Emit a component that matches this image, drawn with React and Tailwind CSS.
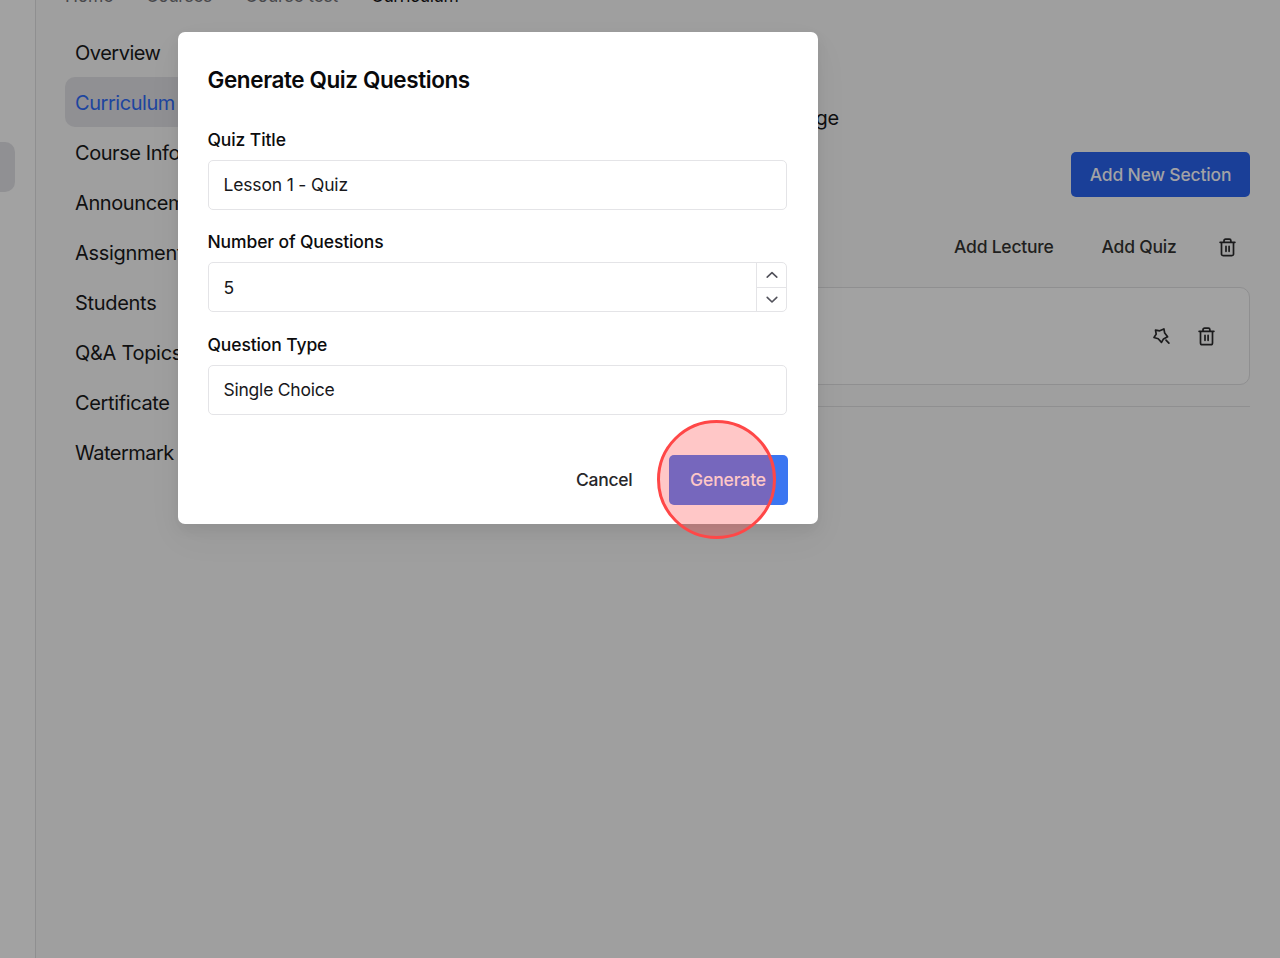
import React from "react";

const NAV = [
  ["Overview", "tracking-[-0.5px]"],
  ["Curriculum", "tracking-[-0.46px]"],
  ["Course Info", "tracking-[-0.44px]"],
  ["Announcement", "tracking-[-0.4px]"],
  ["Assignments", "tracking-[-0.32px]"],
  ["Students", "tracking-[-0.3px]"],
  ["Q&A Topics", "tracking-[-0.3px]"],
  ["Certificate", "tracking-[-0.36px]"],
  ["Watermark", "tracking-[-0.5px]"],
];

function Trash() {
  return (
    <svg className="block h-5 w-5 shrink-0" viewBox="0 0 20 20" fill="none" stroke="#1b1b1c" strokeWidth="1.7" strokeLinecap="round" strokeLinejoin="round">
      <path d="M3.1 5.3h14.8M7 5.1V3.7c0-1 .6-1.6 1.6-1.6h3.7c1 0 1.6.6 1.6 1.6v1.4M4.5 5.5v11.4c0 1 .7 1.7 1.7 1.7h8.6c1 0 1.7-.7 1.7-1.7V5.5M9 9.3v5M12.1 9.3v5" />
    </svg>
  );
}

function MagicStar() {
  return (
    <svg className="block h-5 w-5 shrink-0" viewBox="0 0 20 20" fill="none" stroke="#1b1b1c" strokeWidth="1.7" strokeLinecap="round" strokeLinejoin="round">
      <path d="M12.9 2.9 8.7 4.8 4.5 4.1 5.2 8.1 3 11.5 7.2 12.7 10.5 16.4 12.5 12.9 16.6 10.8 13.7 7.1ZM15 14.2l2.9 2.9" />
    </svg>
  );
}

function Field({ label, labelClass, value, valueClass, children }) {
  return (
    <div className="flex flex-col">
      <label className={`h-6 text-[17.5px] font-medium leading-6 text-[#0c0c0d] whitespace-nowrap ${labelClass}`}>{label}</label>
      <div className="mt-2 flex h-[50px] w-[579.5px] overflow-hidden rounded-[5px] border-[1.25px] border-[#e4e4e7] bg-white">
        <div className="flex flex-1 items-center pl-[15px] text-[17.5px] text-[#18181b] whitespace-nowrap">
          <span className={valueClass}>{value}</span>
        </div>
        {children}
      </div>
    </div>
  );
}

export default function App() {
  return (
    <div className="relative flex h-[958px] w-[1280px] overflow-hidden bg-[#9f9f9f] font-['Inter',sans-serif]">
      <aside className="h-full w-9 shrink-0 border-r border-[#8f8f90] bg-[#a2a2a2] pt-[142px]">
        <div className="h-[50px] w-[15px] rounded-r-[10px] bg-[#909093]" />
      </aside>

      <div className="flex min-w-0 flex-1 flex-col">
        <div className="-mt-[15px] flex h-[22px] items-center pl-[29px] text-[17.5px] leading-[22px] tracking-[-0.2px] whitespace-nowrap text-[#48484b]">
          <span className="w-[81px]">Home</span>
          <span className="w-[99px] tracking-[-0.45px]">Courses</span>
          <span className="w-[126px]">Course test</span>
          <span className="tracking-[-0.4px] text-[#0c0c0d]">Curriculum</span>
        </div>

        <div className="flex pt-5">
          <nav className="ml-[29px] w-[250px] shrink-0">
            {NAV.map(([name, cls]) => (
              <div
                key={name}
                className={`flex h-[50px] items-center rounded-[10px] pt-px pl-[10px] text-[20px] whitespace-nowrap ${
                  name === "Curriculum" ? "bg-[#909093] text-[#1d459f]" : "text-[#101011]"
                }`}
              >
                <span className={cls}>{name}</span>
              </div>
            ))}
          </nav>

          <main className="flex flex-1 flex-col pr-[30px]">
            <div className="mt-[76px] ml-[440px] h-[30px] text-[20px] leading-[30px] tracking-[-0.2px] whitespace-nowrap text-[#101011]">
              <span className="inline-block w-[84px] text-right">Manage</span>
            </div>
            <div className="mt-[19px] flex h-[45px] justify-end">
              <button className="flex h-[45px] w-[179px] items-center justify-center rounded-[5px] bg-[#1a3f98] pt-px text-[17.5px] font-medium tracking-[-0.16px] text-[#a2a2a5] whitespace-nowrap">
                <span>Add New Section</span>
              </button>
            </div>
            <div className="mt-[30px] flex h-10 items-center justify-end pr-[13px] text-[17.5px] font-medium tracking-[-0.22px] text-[#1f1f20] whitespace-nowrap">
              <span className="w-[147.5px]">Add Lecture</span>
              <span className="w-[115.5px]">Add Quiz</span>
              <Trash />
            </div>
            <div className="mt-5 flex h-[98px] items-center justify-end gap-[25px] rounded-[10px] border border-[#8f8f90] bg-[#a2a2a2] pr-[33px]">
              <MagicStar />
              <Trash />
            </div>
            <div className="mt-[21px] border-t border-[#8f8f90]" />
          </main>
        </div>
      </div>

      <div
        role="dialog"
        className="absolute left-[177.5px] top-8 flex h-[492px] w-[640px] flex-col rounded-[7px] bg-white px-[30px] pt-[33px] shadow-[0_6px_14px_0px_rgba(0,0,0,0.06),0_14px_36px_0px_rgba(0,0,0,0.045)]"
      >
        <h2 className="h-[30px] text-[22.5px] font-semibold leading-[30px] tracking-[-0.4px] text-[#09090b] whitespace-nowrap">
          Generate Quiz Questions
        </h2>
        <div className="mt-[33px] flex flex-col gap-[20.4px]">
          <Field label="Quiz Title" labelClass="tracking-[-0.1px]" value="Lesson 1 - Quiz" valueClass="tracking-[-0.17px] pt-px" />
          <Field label="Number of Questions" labelClass="tracking-[-0.12px]" value="5" valueClass="pt-px">
            <div className="flex w-[30px] flex-col border-l-[1.25px] border-[#e4e4e7]">
              {["m5.2 12.2 4.8-4.6 4.8 4.6", "m5.2 7.4 4.8 4.6 4.8-4.6"].map((d, i) => (
                <button key={d} className={`flex flex-1 items-center justify-center ${i ? "border-t border-[#e4e4e7]" : ""}`}>
                  <svg className="h-5 w-5" viewBox="0 0 20 20" fill="none" stroke="#52525b" strokeWidth="1.6" strokeLinecap="round" strokeLinejoin="round">
                    <path d={d} />
                  </svg>
                </button>
              ))}
            </div>
          </Field>
          <Field label="Question Type" labelClass="tracking-[-0.12px]" value="Single Choice" valueClass="tracking-[-0.23px]" />
        </div>
        <div className="mt-10 flex h-[50px] items-center justify-end text-[17.5px] font-medium whitespace-nowrap">
          <button className="mr-9 tracking-[-0.25px] text-[#27272a]">Cancel</button>
          <button className="flex h-[50px] w-[119px] items-center justify-center rounded-[5px] bg-[#3b76f1] tracking-[-0.1px] text-white">
            Generate
          </button>
        </div>
      </div>

      <div className="absolute left-[657px] top-[420px] h-[119px] w-[119px] rounded-full border-[3px] border-[#ff4747] bg-[#ff4747]/30" />
    </div>
  );
}
